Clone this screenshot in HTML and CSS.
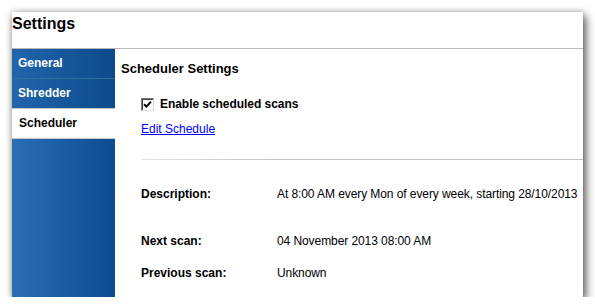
FILE: index.html
```html
<!DOCTYPE html>
<html>
<head>
<meta charset="utf-8">
<link rel="stylesheet" href="styles.css">
</head>
<body>
<div class="window">
  <div class="titlebar"><h1 class="title">Settings</h1></div>
  <div class="body">
    <nav class="sidebar">
      <div class="tab">General</div>
      <div class="tab">Shredder</div>
      <div class="tab active">Scheduler</div>
    </nav>
    <main class="main">
      <h2 class="heading">Scheduler Settings</h2>
      <label class="check-row">
        <span class="checkbox"><svg width="9" height="9" viewBox="0 0 9 9"><path d="M1 4.2 L3.4 6.6 L8 1.6" fill="none" stroke="#000" stroke-width="2"/></svg></span>
        <span class="check-label">Enable scheduled scans</span>
      </label>
      <a class="link" href="#">Edit Schedule</a>
      <div class="divider"></div>
      <div class="info">
        <div class="key">Description:</div>
        <div class="val">At 8:00 AM every Mon of every week, starting 28/10/2013</div>
        <div class="key">Next scan:</div>
        <div class="val">04 November 2013 08:00 AM</div>
        <div class="key">Previous scan:</div>
        <div class="val">Unknown</div>
      </div>
    </main>
  </div>
</div>
</body>
</html>
```

FILE: styles.css
```css
html, body {
  margin: 0;
  padding: 0;
  background: #fff;
}
body {
  font-family: "Liberation Sans", Arial, sans-serif;
  color: #111;
}
.window {
  margin: 12px 0 0 12px;
  width: 571px;
  height: 285px;
  background: #fff;
  box-shadow: 3px 4px 9px rgba(0,0,0,0.6), 0 0 6px rgba(0,0,0,0.25);
  display: flex;
  flex-direction: column;
}
.titlebar {
  box-sizing: border-box;
  height: 37px;
  border-bottom: 1px solid #b9b9b9;
}
.title {
  margin: 0;
  padding-top: 3px;
  font-size: 16px;
  line-height: 18px;
  font-weight: bold;
  color: #000;
}
.body {
  flex: 1;
  display: flex;
}
.sidebar {
  width: 103px;
  background: linear-gradient(to right, #2b6eb4, #0b4c90);
  display: flex;
  flex-direction: column;
}
.tab {
  height: 29px;
  border-bottom: 1px solid #2a7494;
  padding-left: 6px;
  font-size: 12px;
  font-weight: bold;
  line-height: 29px;
  color: #fff;
  background: linear-gradient(to right, #2265ab, #0b4a8c);
}
.tab.active {
  background: #fff;
  color: #000;
  border-top: 1px solid #c8c8c8;
  border-bottom: 1px solid #c8c8c8;
  height: 29px;
  margin-top: -1px;
  padding-left: 7px;
}
.main {
  flex: 1;
  padding-left: 6px;
  display: flex;
  flex-direction: column;
  align-items: flex-start;
}
.heading {
  margin: 12px 0 0;
  font-size: 13px;
  line-height: 16px;
  font-weight: bold;
  color: #000;
}
.check-row {
  margin: 19px 0 0 20px;
  display: flex;
  align-items: center;
  gap: 6px;
  height: 16px;
}
.checkbox {
  width: 11px;
  height: 11px;
  border: 1px solid;
  border-color: #7a7a7a #dcdcdc #dcdcdc #7a7a7a;
  box-shadow: inset 1px 1px 0 #404040;
  background: #fff;
  display: flex;
  align-items: center;
  justify-content: center;
}
.check-label {
  font-size: 12px;
  font-weight: bold;
  color: #000;
  letter-spacing: -0.05px;
}
.link {
  margin: 9px 0 0 20px;
  font-size: 12px;
  line-height: 16px;
  color: #0000ff;
  text-decoration: underline;
}
.divider {
  margin: 22px 0 0 20px;
  height: 1px;
  align-self: stretch;
  background: linear-gradient(to right, #e4e4e4, #c4c4c4 30%, #c4c4c4);
}
.info {
  margin: 26px 0 0 20px;
  display: grid;
  grid-template-columns: 136px auto;
  grid-template-rows: 47px 32px 16px;
  font-size: 12px;
  line-height: 16px;
  color: #000;
}
.key {
  font-weight: bold;
}
.val {
  letter-spacing: -0.08px;
}
```
